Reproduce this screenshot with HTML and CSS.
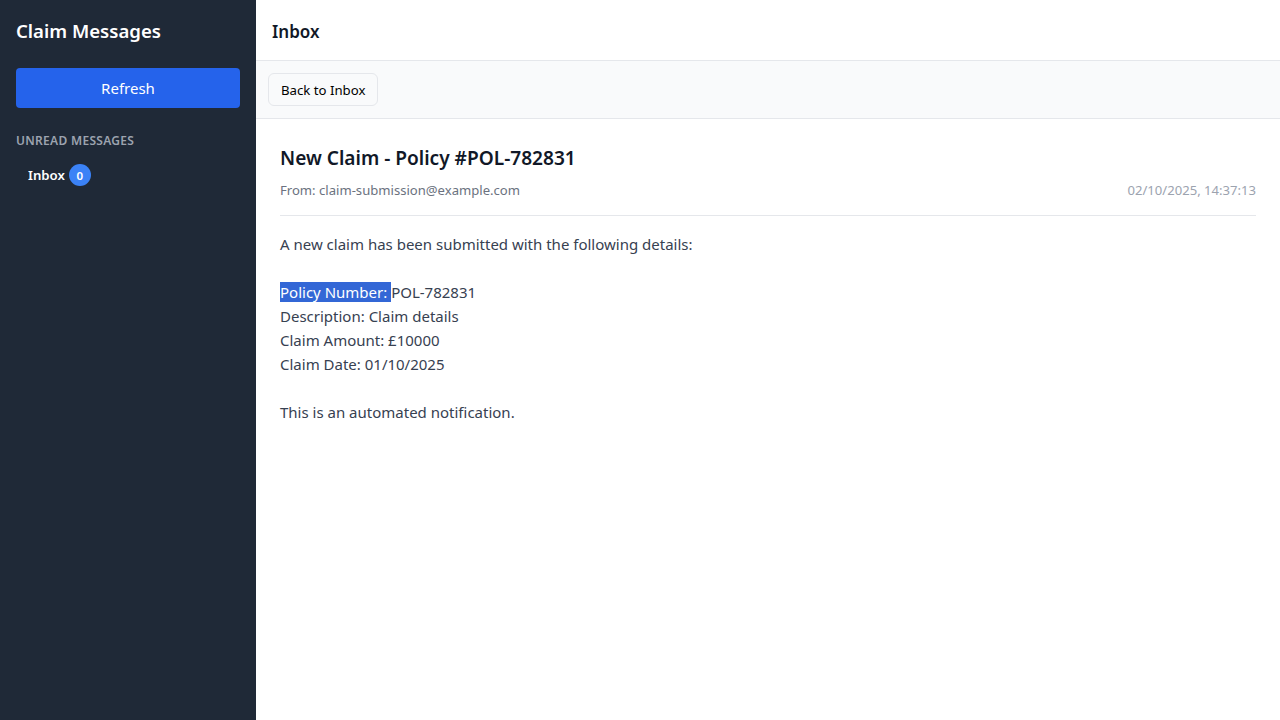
FILE: index.html
```html
<!DOCTYPE html>
<html lang="en">
<head>
<meta charset="utf-8">
<title>Claim Messages</title>
<link rel="stylesheet" href="styles.css">
</head>
<body>
<div class="app">
  <aside class="sidebar">
    <h1 class="brand">Claim Messages</h1>
    <button class="refresh">Refresh</button>
    <div class="section-label">UNREAD MESSAGES</div>
    <div class="folder"><span class="folder-name">Inbox</span><span class="badge">0</span></div>
  </aside>
  <main class="main">
    <header class="topbar"><h2 class="topbar-title">Inbox</h2></header>
    <div class="toolbar"><button class="back">Back to Inbox</button></div>
    <section class="message">
      <h3 class="subject">New Claim - Policy #POL-782831</h3>
      <div class="meta">
        <span class="from">From: claim-submission@example.com</span>
        <span class="date">02/10/2025, 14:37:13</span>
      </div>
      <div class="body">A new claim has been submitted with the following details:

<span class="sel">Policy Number: </span>POL-782831
Description: Claim details
Claim Amount: £10000
Claim Date: 01/10/2025

This is an automated notification.</div>
    </section>
  </main>
</div>
</body>
</html>
```
FILE: styles.css
```css
* { box-sizing: border-box; }
html, body { margin: 0; height: 100%; }
body {
  font-family: "Noto Sans", "Open Sans", sans-serif;
  background: #ffffff;
  color: #111827;
}
.app { display: flex; height: 720px; }
.sidebar {
  width: 256px;
  flex: 0 0 256px;
  background: #1f2937;
  color: #ffffff;
  padding: 16px;
  display: flex;
  flex-direction: column;
}
.brand {
  margin: 0;
  font-size: 18.6px;
  font-weight: 600;
  line-height: 30px;
}
.refresh {
  margin-top: 22px;
  height: 40px;
  width: 100%;
  border: none;
  border-radius: 4px;
  background: #2563eb;
  color: #ffffff;
  font-family: inherit;
  font-size: 15px;
}
.section-label {
  margin-top: 24px;
  font-size: 12px;
  font-weight: 600;
  color: #9ca3af;
  letter-spacing: 0.3px;
  line-height: 18px;
}
.folder {
  margin-top: 14px;
  padding-left: 12px;
  display: flex;
  align-items: center;
  gap: 4px;
  font-size: 13.2px;
  font-weight: 600;
}
.badge {
  width: 22px;
  height: 22px;
  border-radius: 50%;
  background: #3b82f6;
  color: #fff;
  font-size: 11.5px;
  font-weight: 600;
  display: flex;
  align-items: center;
  justify-content: center;
}
.main { flex: 1; display: flex; flex-direction: column; min-width: 0; }
.topbar {
  height: 61px;
  border-bottom: 1px solid #e5e7eb;
  display: flex;
  align-items: center;
  padding: 2px 16px 0;
}
.topbar-title { margin: 0; font-size: 17px; font-weight: 600; color: #111827; }
.toolbar {
  height: 58px;
  background: #f9fafb;
  border-bottom: 1px solid #e5e7eb;
  display: flex;
  align-items: center;
  padding: 0 12px;
}
.back {
  height: 33px;
  padding: 0 12px;
  border: 1px solid #e5e7eb;
  border-radius: 6px;
  background: #f9fafb;
  color: #000;
  font-family: inherit;
  font-size: 13.2px;
}
.message { padding: 24px 24px; }
.subject { margin: 0; font-size: 19.1px; font-weight: 600; line-height: 30px; color: #111827; }
.meta {
  display: flex;
  justify-content: space-between;
  margin-top: 7px;
  padding-bottom: 15px;
  border-bottom: 1px solid #e5e7eb;
  font-size: 13.1px;
  line-height: 20px;
}
.from { color: #6b7280; }
.date { color: #9ca3af; }
.body {
  margin-top: 16px;
  white-space: pre-wrap;
  font-size: 15px;
  line-height: 24px;
  color: #374151;
}
.sel { background: #3367d6; color: #ffffff; }
```
